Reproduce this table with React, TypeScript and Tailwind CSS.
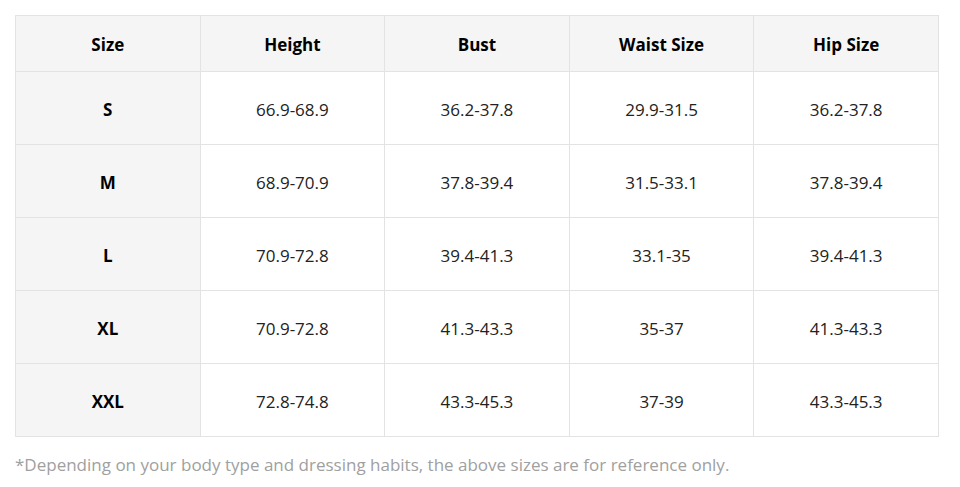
const headers = ['Size', 'Height', 'Bust', 'Waist Size', 'Hip Size'];

const rows = [
    ['S', '66.9-68.9', '36.2-37.8', '29.9-31.5', '36.2-37.8'],
    ['M', '68.9-70.9', '37.8-39.4', '31.5-33.1', '37.8-39.4'],
    ['L', '70.9-72.8', '39.4-41.3', '33.1-35', '39.4-41.3'],
    ['XL', '70.9-72.8', '41.3-43.3', '35-37', '41.3-43.3'],
    ['XXL', '72.8-74.8', '43.3-45.3', '37-39', '43.3-45.3'],
];

export default function App() {
    return (
        <div className="min-h-[487px] bg-white px-[15px] pt-[15px] font-['Open_Sans',sans-serif]">
            <table className="w-[924px] table-fixed border-collapse border border-[#e3e3e3] text-center">
                <thead>
                    <tr className="h-[56px] bg-[#f5f5f5]">
                        {headers.map((h) => (
                            <th
                                key={h}
                                className="border border-[#e3e3e3] pt-[3px] text-[17px] font-bold text-black"
                            >
                                {h}
                            </th>
                        ))}
                    </tr>
                </thead>
                <tbody>
                    {rows.map((row) => (
                        <tr key={row[0]} className="h-[73px]">
                            {row.map((cell, i) => (
                                <td
                                    key={i}
                                    className={
                                        i === 0
                                            ? 'border border-[#e3e3e3] bg-[#f5f5f5] pt-[3px] text-[17px] font-bold text-black'
                                            : 'border border-[#e3e3e3] bg-white pt-[3px] text-[17px] text-[#222]'
                                    }
                                >
                                    {cell}
                                </td>
                            ))}
                        </tr>
                    ))}
                </tbody>
            </table>
            <p className="mt-[15px] text-[17px] text-[#a0a0a0]">
                *Depending on your body type and dressing habits, the above sizes are for reference only.
            </p>
        </div>
    );
}
